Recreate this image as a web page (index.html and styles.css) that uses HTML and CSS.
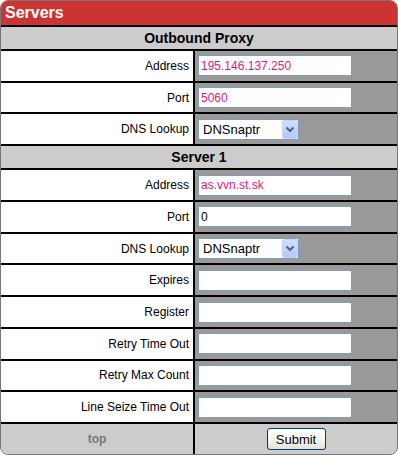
FILE: index.html
```html
<!DOCTYPE html>
<html>
<head>
<meta charset="utf-8">
<link rel="stylesheet" href="styles.css">
</head>
<body>
<div class="panel">
  <div class="title">Servers</div>

  <div class="section">Outbound Proxy</div>
  <div class="row"><div class="label">Address</div><div class="field"><input class="text pink" type="text" value="195.146.137.250"></div></div>
  <div class="row"><div class="label">Port</div><div class="field"><input class="text pink" type="text" value="5060"></div></div>
  <div class="row"><div class="label">DNS Lookup</div><div class="field"><span class="selwrap"><select class="sel"><option>DNSnaptr</option></select><svg class="selbtn" width="16" height="19" viewBox="0 0 16 19"><defs><linearGradient id="g1" x1="0" y1="0" x2="0" y2="1"><stop offset="0" stop-color="#d3e0fd"/><stop offset="1" stop-color="#b2c8f6"/></linearGradient></defs><rect x="0.5" y="0.5" width="15" height="18" rx="2" fill="url(#g1)" stroke="#c3d3fd"/><path d="M4.5 7.5 L8 11 L11.5 7.5" fill="none" stroke="#4d6185" stroke-width="2"/></svg></span></div></div>

  <div class="section">Server 1</div>
  <div class="row"><div class="label">Address</div><div class="field"><input class="text pink" type="text" value="as.vvn.st.sk"></div></div>
  <div class="row"><div class="label">Port</div><div class="field"><input class="text" type="text" value="0"></div></div>
  <div class="row"><div class="label">DNS Lookup</div><div class="field"><span class="selwrap"><select class="sel"><option>DNSnaptr</option></select><svg class="selbtn" width="16" height="19" viewBox="0 0 16 19"><defs><linearGradient id="g2" x1="0" y1="0" x2="0" y2="1"><stop offset="0" stop-color="#d3e0fd"/><stop offset="1" stop-color="#b2c8f6"/></linearGradient></defs><rect x="0.5" y="0.5" width="15" height="18" rx="2" fill="url(#g2)" stroke="#c3d3fd"/><path d="M4.5 7.5 L8 11 L11.5 7.5" fill="none" stroke="#4d6185" stroke-width="2"/></svg></span></div></div>
  <div class="row"><div class="label">Expires</div><div class="field"><input class="text" type="text" value=""></div></div>
  <div class="row"><div class="label">Register</div><div class="field"><input class="text" type="text" value=""></div></div>
  <div class="row"><div class="label">Retry Time Out</div><div class="field"><input class="text" type="text" value=""></div></div>
  <div class="row"><div class="label">Retry Max Count</div><div class="field"><input class="text" type="text" value=""></div></div>
  <div class="row"><div class="label">Line Seize Time Out</div><div class="field"><input class="text" type="text" value=""></div></div>

  <div class="row footer"><div class="label top">top</div><div class="field center"><button class="submit" type="button">Submit</button></div></div>
</div>
</body>
</html>
```
FILE: styles.css
```css
html, body {
  margin: 0;
  padding: 0;
  background: #fff;
}
body {
  font-family: "Liberation Sans", Arial, sans-serif;
  font-size: 12px;
}
.panel {
  width: 396px;
  height: 453px;
  border: 1px solid #777;
  border-radius: 8px;
  overflow: hidden;
  display: flex;
  flex-direction: column;
  background: #ccc;
}
.title {
  height: 24px;
  background: #cc3333;
  color: #fff;
  font-weight: bold;
  font-size: 16px;
  line-height: 24px;
  padding-left: 4px;
  border-bottom: 2px solid #000;
}
.section {
  height: 22px;
  background: #ccc;
  font-weight: bold;
  font-size: 14px;
  line-height: 22px;
  text-align: center;
  color: #000;
}
.row + .section {
  border-top: 2px solid #000;
}
.row {
  display: grid;
  grid-template-columns: 194px 1fr;
  height: 29.75px;
  border-top: 2px solid #000;
}
.section:first-of-type + .row {
  height: 30.75px;
}
.label {
  background: #fff;
  border-right: 2px solid #000;
  text-align: right;
  padding-right: 4px;
  display: flex;
  align-items: center;
  justify-content: flex-end;
  color: #000;
}
.field {
  background: #999;
  display: flex;
  align-items: center;
  padding-left: 3px;
}
.text {
  box-sizing: border-box;
  width: 154px;
  height: 21px;
  border: 1px solid #7f9db9;
  padding: 0 2px;
  margin: 0;
  font-family: "Liberation Sans", Arial, sans-serif;
  font-size: 12px;
  color: #000;
  background: #fff;
  outline: none;
}
.pink {
  color: #e2177c;
}
.selwrap {
  position: relative;
  display: inline-block;
  width: 101px;
  height: 21px;
}
.sel {
  box-sizing: border-box;
  -webkit-appearance: none;
  appearance: none;
  width: 101px;
  height: 21px;
  border: 1px solid #7f9db9;
  border-radius: 0;
  background: #fff;
  margin: 0;
  padding: 0 0 0 4px;
  font-family: "Liberation Sans", Arial, sans-serif;
  font-size: 13px;
  color: #000;
  outline: none;
}
.selbtn {
  position: absolute;
  right: 1px;
  top: 1px;
  pointer-events: none;
}
.footer {
  height: 30px;
}
.footer .label {
  background: #ccc;
}
.top {
  justify-content: center;
  padding-right: 0;
  color: #777;
  font-weight: bold;
}
.footer .field {
  background: #ccc;
}
.center {
  justify-content: center;
  padding-left: 0;
}
.submit {
  box-sizing: border-box;
  width: 59px;
  height: 22px;
  border: 1px solid #003c74;
  border-radius: 3px;
  background: linear-gradient(to bottom, #ffffff 0%, #f5f4ef 60%, #e3e0d6 100%);
  font-family: "Liberation Sans", Arial, sans-serif;
  font-size: 13px;
  color: #000;
  padding: 0;
  margin: 0;
}
```
